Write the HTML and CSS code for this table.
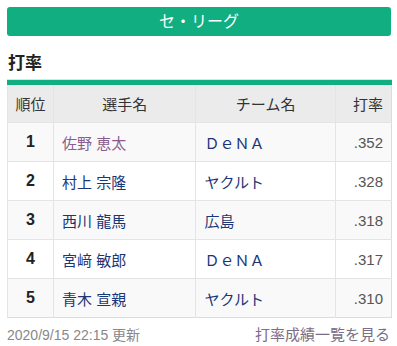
FILE: index.html
```html
<!DOCTYPE html>
<html lang="ja">
<head>
<meta charset="utf-8">
<link rel="stylesheet" href="styles.css">
</head>
<body>
<div class="wrap">
  <div class="league">セ・リーグ</div>
  <h2 class="title">打率</h2>
  <div class="table-box">
  <table class="rank">
    <colgroup>
      <col class="c1"><col class="c2"><col class="c3"><col class="c4">
    </colgroup>
    <thead>
      <tr><th>順位</th><th>選手名</th><th>チーム名</th><th>打率</th></tr>
    </thead>
    <tbody>
      <tr><td class="no">1</td><td><a class="visited" href="#">佐野 恵太</a></td><td class="team">ＤｅＮＡ</td><td class="avg">.352</td></tr>
      <tr><td class="no">2</td><td><a href="#">村上 宗隆</a></td><td class="team">ヤクルト</td><td class="avg">.328</td></tr>
      <tr><td class="no">3</td><td><a href="#">西川 龍馬</a></td><td class="team">広島</td><td class="avg">.318</td></tr>
      <tr><td class="no">4</td><td><a href="#">宮﨑 敏郎</a></td><td class="team">ＤｅＮＡ</td><td class="avg">.317</td></tr>
      <tr><td class="no">5</td><td><a href="#">青木 宣親</a></td><td class="team">ヤクルト</td><td class="avg">.310</td></tr>
    </tbody>
  </table>
  </div>
  <div class="foot">
    <span class="updated">2020/9/15 22:15 更新</span>
    <a class="more" href="#">打率成績一覧を見る</a>
  </div>
</div>
</body>
</html>
```
FILE: styles.css
```css
html, body {
  margin: 0;
  padding: 0;
  background: #fff;
}
body {
  font-family: "Liberation Sans", "Noto Sans CJK JP", sans-serif;
  color: #333;
}
.wrap {
  padding: 7px 6px 0 7px;
}
.league {
  height: 29px;
  line-height: 29px;
  background: #10ae80;
  color: #fff;
  text-align: center;
  font-size: 16px;
  border-radius: 3px;
}
.title {
  margin: 16px 0 3px 1px;
  font-size: 17px;
  line-height: 24px;
  font-weight: bold;
  color: #222;
}
.table-box {
  width: 385px;
  border-top: 1px solid #e2e2e2;
}
.rank {
  width: 385px;
  border-collapse: collapse;
  border: 1px solid #dcdcdc;
  border-top: 0;
  font-size: 15px;
}
.c1 { width: 46px; }
.c2 { width: 142px; }
.c3 { width: 139px; }
.c4 { width: 56px; }
.rank th {
  background: #ebebeb;
  border-top: 5px solid #10ae80;
  border-left: 1px solid #e4e4e4;
  height: 37px;
  padding: 0;
  font-weight: normal;
  color: #333;
  text-align: center;
}
.rank th:last-child {
  text-align: right;
  padding-right: 8px;
}
.rank td {
  height: 38px;
  padding: 0 8px;
  border-top: 1px solid #e4e4e4;
  border-left: 1px solid #e4e4e4;
}
.rank tbody tr:nth-child(odd) td {
  background: #f9f9f9;
}
.rank td.no {
  text-align: center;
  font-weight: bold;
  font-size: 16px;
  color: #222;
  padding: 0;
}
.rank a {
  color: #1a3677;
  text-decoration: none;
}
.rank a.visited {
  color: #8a5d8f;
}
.rank td.team {
  color: #1a3677;
}
.rank td.avg {
  text-align: right;
  color: #555;
}
.foot {
  display: flex;
  justify-content: space-between;
  margin-top: 7px;
  font-size: 14px;
  line-height: 20px;
}
.updated {
  color: #888;
}
.more {
  color: #7a6e88;
  text-decoration: none;
  margin-right: 1px;
  font-size: 15px;
}
```
